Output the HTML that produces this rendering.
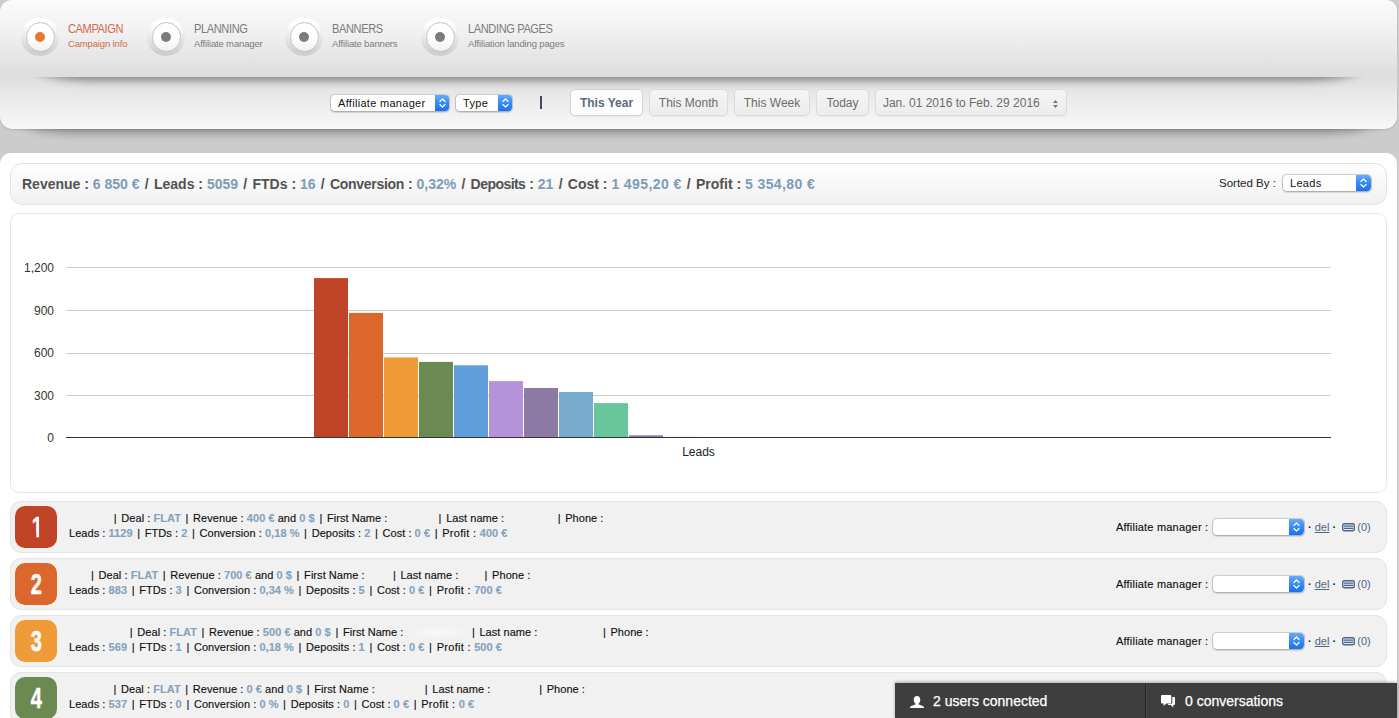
<!DOCTYPE html>
<html><head><meta charset="utf-8"><title>Campaign</title>
<style>
*{box-sizing:border-box}
html,body{margin:0;padding:0}
body{width:1399px;height:718px;overflow:hidden;background:#cccccc;font-family:"Liberation Sans","DejaVu Sans",sans-serif;font-size:11px;color:#222;position:relative}
#topsh{position:absolute;left:18px;top:115px;width:1361px;height:14px;border-radius:0 0 60px 60px/0 0 14px 14px;box-shadow:0 4px 10px rgba(0,0,0,.33)}
#top{position:absolute;left:0;top:0;width:1397px;height:129px;border-radius:12px 11px 13px 13px;background:linear-gradient(#dfdfdf 0,#dfdfdf 78px,#ebebeb 100px,#f8f8f8 129px);box-shadow:0 1px 2px rgba(0,0,0,.12);overflow:hidden}
#nav{position:absolute;left:0;top:0;width:1397px;height:77px;background:linear-gradient(#fbfbfb,#f1f1f1 40%,#dddddd);z-index:2}
#navsh{position:absolute;left:34px;top:63px;width:1329px;height:14px;border-radius:0 0 60px 60px/0 0 14px 14px;box-shadow:0 3px 10px rgba(0,0,0,.45);z-index:1}
.ni{position:absolute;top:0;height:77px}
.ni .c{position:absolute;left:-1px;top:18px;width:38px;height:38px;border-radius:50%;background:linear-gradient(#fff 15%,#cfcfcf 90%)}
.ni .c:before{content:"";position:absolute;left:4.600px;top:4.300px;width:27.500px;height:27.500px;border-radius:50%;background:linear-gradient(#fff 50%,#f1f1f1);border:1px solid #c4c4c4}
.ni .c:after{content:"";position:absolute;left:14.300px;top:14px;width:10.200px;height:10.200px;border-radius:50%;background:#7c7c7c}
.ni.on .c:after{background:#e8792c}
.ni .t{position:absolute;left:46px;top:22px;font-size:12px;line-height:14px;color:#7b7b7b;white-space:nowrap;letter-spacing:-.4px;transform:scaleX(.92);transform-origin:0 0}
.ni .s{position:absolute;left:46px;top:38px;font-size:9.5px;line-height:12px;color:#7b7b7b;white-space:nowrap;letter-spacing:-.15px}
.ni.on .t,.ni.on .s{color:#d4694a}

#filters{position:absolute;left:0;top:77px;width:1397px;height:51px}
.sel{position:absolute;height:18px;border-radius:5px;background:#fff;border:1px solid #c2c2c2;border-top-color:#cdcdcd;border-bottom-color:#b0b0b0;font-size:11px;line-height:16px;color:#111;padding-left:7px;white-space:nowrap;overflow:hidden;box-shadow:0 .5px 1px rgba(0,0,0,.12);letter-spacing:.3px}
.sel i{position:absolute;right:-1px;top:-1px;width:15px;height:18px;border-radius:0 5px 5px 0;background:linear-gradient(#6bb0fa,#3b8df6 45%,#1a6cf0)}
.sel i svg{position:absolute;left:0;top:0}
.btn{position:absolute;top:12px;height:27px;border:1px solid #dbdbdb;border-radius:5px;background:linear-gradient(#f5f5f5,#ececec);box-shadow:0 1px 1px rgba(0,0,0,.04);color:#6c6c6c;font-size:12px;line-height:26.500px;text-align:center;white-space:nowrap}
.btn.act{background:#fdfdfd;color:#5d6a80;font-weight:bold;border-color:#d4d4d4}
#sep{position:absolute;left:540px;top:19px;width:2px;height:13px;background:#3f4a5c}
#main{position:absolute;left:0;top:153px;width:1397px;height:600px;background:#fff;border-radius:11px 11px 0 0}
#sum{position:absolute;left:10px;top:10px;width:1377px;height:42px;border:1px solid #e3e3e3;border-radius:12px;background:linear-gradient(#fefefe,#f1f1f1);font-size:14px;font-weight:bold;color:#525252;line-height:40px;padding-left:11px;white-space:nowrap;letter-spacing:0}
#sum b{color:#7d9cb7}
#sum i{font-style:normal;margin:0 1.4px}
#sorted{position:absolute;left:1208px;top:0;font-size:11.5px;font-weight:normal;color:#222;line-height:38px}
#chart{position:absolute;left:10px;top:60px;width:1377px;height:280px;border:1px solid #e6e6e6;border-radius:9px;background:#fff;overflow:hidden}
.row{position:absolute;left:10px;width:1377px;height:52px;border:1px solid #e4e4e4;border-radius:11px;background:#f1f1f1;font-size:11px;color:#111}
.row .n{position:absolute;left:4px;top:4px;width:42px;height:42px;border-radius:10px;color:#fff;font-weight:bold;font-size:29.5px;line-height:42px;text-align:center}
.row .n span{display:inline-block;transform:scaleX(.68);-webkit-text-stroke:.5px #fff}
.row .l1,.row .l2,.row .am{-webkit-text-stroke:.15px}
.row .l1,.row .l2{position:absolute;left:58px;white-space:nowrap;line-height:15px;height:15px;letter-spacing:.05px}
.row .l1{top:9px}.row .l2{top:24px}
.row b{font-weight:bold;color:#86a3bd}
.row i{font-style:normal;margin:0 1.5px}
.row u{text-decoration:none;color:#9aa}
.sp{display:inline-block}
.sp.sm{height:11px;vertical-align:-2px;background:radial-gradient(ellipse closest-side,rgba(255,255,255,.55),rgba(255,255,255,.3) 60%,rgba(255,255,255,0))}
.row s{text-decoration:none}.row s.p{letter-spacing:.3px}
.row .am{position:absolute;left:1105px;top:18px;line-height:15px;white-space:nowrap;letter-spacing:.2px}
.row .sel{left:1201px;top:16px;width:93px}
.row .tail{position:absolute;left:1297px;top:18px;line-height:15px;white-space:nowrap;color:#4e6784}
.row .tail em{font-style:normal;font-weight:bold;color:#222}
.row .tail a{color:#4e6784;text-decoration:underline}
#bar{position:absolute;left:895px;top:683px;width:502px;height:36px;background:#3e3e3e;color:#fff;font-size:14px;line-height:36px;-webkit-text-stroke:.25px #fff;box-shadow:0 -1px 3px rgba(0,0,0,.3)}
#bar .d{position:absolute;left:250px;top:0;width:2px;height:36px;background:linear-gradient(90deg,#262626 50%,#4a4a4a 50%)}
#bar span{position:absolute;top:0;white-space:nowrap}
#bar svg{position:absolute}
</style></head><body>
<div id="topsh"></div>
<div id="top">
 <div id="navsh"></div>
 <div id="nav">
  <div class="ni on" style="left:22px"><span class="c"></span><span class="t">CAMPAIGN</span><span class="s">Campaign info</span></div>
  <div class="ni" style="left:148px"><span class="c"></span><span class="t">PLANNING</span><span class="s">Affiliate manager</span></div>
  <div class="ni" style="left:286px"><span class="c"></span><span class="t">BANNERS</span><span class="s">Affiliate banners</span></div>
  <div class="ni" style="left:422px"><span class="c"></span><span class="t">LANDING PAGES</span><span class="s">Affiliation landing pages</span></div>
 </div>

 <div id="filters">
  <div class="sel" style="left:330px;top:17px;width:120px">Affiliate manager<i><svg width="15" height="18" viewBox="0 0 15 18"><path d="M4.900 7.500 7.500 5 10.100 7.500M4.900 10.500 7.500 13 10.100 10.500" fill="none" stroke="#fff" stroke-width="1.200" stroke-linecap="round" stroke-linejoin="round"/></svg></i></div>
  <div class="sel" style="left:455px;top:17px;width:58px">Type<i><svg width="15" height="18" viewBox="0 0 15 18"><path d="M4.900 7.500 7.500 5 10.100 7.500M4.900 10.500 7.500 13 10.100 10.500" fill="none" stroke="#fff" stroke-width="1.200" stroke-linecap="round" stroke-linejoin="round"/></svg></i></div>
  <div id="sep"></div>
  <div class="btn act" style="left:570px;width:73px">This Year</div>
  <div class="btn" style="left:649px;width:79px">This Month</div>
  <div class="btn" style="left:734px;width:76px">This Week</div>
  <div class="btn" style="left:816px;width:53px">Today</div>
  <div class="btn" style="left:875px;width:192px">Jan. 01 2016 to Feb. 29 2016 <svg width="7" height="10" viewBox="0 0 7 10" style="margin-left:9px;vertical-align:-1.500px"><path d="M1 4 3.500 1 6 4zM1 6 3.500 9 6 6z" fill="#777"/></svg></div>
 </div>
</div>
<div id="main">
<div id="sum">Revenue : <b>6 850 €</b> <i>/</i> Leads : <b>5059</b> <i>/</i> FTDs : <b>16</b> <i>/</i> <span style="letter-spacing:-.3px">Conversion</span> : <b>0,32%</b> <i>/</i> <span style="letter-spacing:-.55px">Deposits</span> : <b>21</b> <i>/</i> Cost : <b style="letter-spacing:.4px">1 495,20 €</b> <i>/</i> Profit : <b style="letter-spacing:.4px">5 354,80 €</b>
<div id="sorted">Sorted By :</div><div class="sel" style="left:1271px;top:10px;width:90px;font-weight:normal">Leads<i><svg width="15" height="18" viewBox="0 0 15 18"><path d="M4.900 7.500 7.500 5 10.100 7.500M4.900 10.500 7.500 13 10.100 10.500" fill="none" stroke="#fff" stroke-width="1.200" stroke-linecap="round" stroke-linejoin="round"/></svg></i></div></div>
<div id="chart"><svg width="1375" height="277" style="position:absolute;left:0;top:1px" font-family="Liberation Sans, Arial, sans-serif" font-size="12">
<rect x="55" y="52" width="1265" height="1" fill="#ccc"/>
<rect x="55" y="95.0" width="1265" height="1" fill="#ccc"/>
<rect x="55" y="138" width="1265" height="1" fill="#ccc"/>
<rect x="55" y="180.0" width="1265" height="1" fill="#ccc"/>
<text x="43" y="57.3" text-anchor="end" fill="#333">1,200</text>
<text x="43" y="99.8" text-anchor="end" fill="#333">900</text>
<text x="43" y="142.3" text-anchor="end" fill="#333">600</text>
<text x="43" y="184.8" text-anchor="end" fill="#333">300</text>
<text x="43" y="227.3" text-anchor="end" fill="#333">0</text>
<rect x="303" y="63.1" width="34" height="159.9" fill="#bf4427"/>
<rect x="338" y="97.9" width="34" height="125.1" fill="#dc672d"/>
<rect x="373" y="142.4" width="34" height="80.6" fill="#ef9b38"/>
<rect x="408" y="146.9" width="34" height="76.1" fill="#6b8a52"/>
<rect x="443" y="150.3" width="34" height="72.7" fill="#5f9edb"/>
<rect x="478" y="166.2" width="34" height="56.8" fill="#b592d9"/>
<rect x="513" y="173.0" width="34" height="50.0" fill="#8d7aa4"/>
<rect x="548" y="177.0" width="34" height="46.0" fill="#77abce"/>
<rect x="583" y="188.1" width="34" height="34.9" fill="#68c59c"/>
<rect x="618" y="220.3" width="34" height="2.7" fill="#8a7ab4"/>
<rect x="653" y="221.9" width="34" height="1.1" fill="#7a6a8a"/>
<rect x="688" y="222.4" width="34" height="0.6" fill="#999"/>
<rect x="723" y="222.7" width="34" height="0.3" fill="#aaa"/>
<rect x="55" y="222" width="1265" height="1" fill="#333"/>
<text x="687.5" y="241" text-anchor="middle" fill="#222">Leads</text>
</svg></div>
<div class="row" style="top:348px"><div class="n" style="background:#bf4427"><span style="clip-path:polygon(0 0,67% 0,67% 100%,42% 100%,42% 27px,0 27px);position:relative;left:1.6px">1</span></div>
 <div class="l1"><span class="sp" style="width:43.3px"></span><i>|</i> Deal : <b>FLAT</b> <i>|</i> Revenue : <b>400 €</b> and <b>0 $</b> <i>|</i> First Name : <span class="sp" style="width:46.6px"></span><i>|</i> Last name : <span class="sp" style="width:48.9px"></span><i>|</i> Phone :</div><div class="l2">Leads : <b>1129</b> <i>|</i> FTDs : <b>2</b> <i>|</i> Conversion : <b>0,18 %</b> <i>|</i> Deposits : <b>2</b> <i>|</i> <s>Cost : </s><b>0 €</b> <i>|</i> <s class="p">Profit : </s><b>400 €</b></div>
 <div class="am">Affiliate manager :</div><div class="sel"><i><svg width="15" height="18" viewBox="0 0 15 18"><path d="M4.900 7.500 7.500 5 10.100 7.500M4.900 10.500 7.500 13 10.100 10.500" fill="none" stroke="#fff" stroke-width="1.200" stroke-linecap="round" stroke-linejoin="round"/></svg></i></div><div class="tail"><em>·</em> <a>del</a> <em>·</em> <svg width="13" height="8.500" viewBox="0 0 13 8.500" style="vertical-align:-.5px;margin-left:2.5px;margin-right:-.5px"><rect x=".7" y=".7" width="11.600" height="7.100" rx="1.500" fill="#e3e9f0" stroke="#4e6784" stroke-width="1.400"/><path d="M2 3.100h9M2 5.400h9" stroke="#4e6784" stroke-width="1.100"/></svg> (0)</div></div>
<div class="row" style="top:405px"><div class="n" style="background:#dc672d"><span>2</span></div>
 <div class="l1"><span class="sp" style="width:20.5px"></span><i>|</i> Deal : <b>FLAT</b> <i>|</i> Revenue : <b>700 €</b> and <b>0 $</b> <i>|</i> First Name : <span class="sp" style="width:23.7px"></span><i>|</i> Last name : <span class="sp" style="width:21.5px"></span><i>|</i> Phone :</div><div class="l2">Leads : <b>883</b> <i>|</i> FTDs : <b>3</b> <i>|</i> Conversion : <b>0,34 %</b> <i>|</i> Deposits : <b>5</b> <i>|</i> <s>Cost : </s><b>0 €</b> <i>|</i> <s class="p">Profit : </s><b>700 €</b></div>
 <div class="am">Affiliate manager :</div><div class="sel"><i><svg width="15" height="18" viewBox="0 0 15 18"><path d="M4.900 7.500 7.500 5 10.100 7.500M4.900 10.500 7.500 13 10.100 10.500" fill="none" stroke="#fff" stroke-width="1.200" stroke-linecap="round" stroke-linejoin="round"/></svg></i></div><div class="tail"><em>·</em> <a>del</a> <em>·</em> <svg width="13" height="8.500" viewBox="0 0 13 8.500" style="vertical-align:-.5px;margin-left:2.5px;margin-right:-.5px"><rect x=".7" y=".7" width="11.600" height="7.100" rx="1.500" fill="#e3e9f0" stroke="#4e6784" stroke-width="1.400"/><path d="M2 3.100h9M2 5.400h9" stroke="#4e6784" stroke-width="1.100"/></svg> (0)</div></div>
<div class="row" style="top:462px"><div class="n" style="background:#ef9b38"><span>3</span></div>
 <div class="l1"><span class="sp" style="width:59.3px"></span><i>|</i> Deal : <b>FLAT</b> <i>|</i> Revenue : <b>500 €</b> and <b>0 $</b> <i>|</i> First Name : <span class="sp sm" style="width:63.9px"></span><i>|</i> Last name : <span class="sp" style="width:60.8px"></span><i>|</i> Phone :</div><div class="l2">Leads : <b>569</b> <i>|</i> FTDs : <b>1</b> <i>|</i> Conversion : <b>0,18 %</b> <i>|</i> Deposits : <b>1</b> <i>|</i> <s>Cost : </s><b>0 €</b> <i>|</i> <s class="p">Profit : </s><b>500 €</b></div>
 <div class="am">Affiliate manager :</div><div class="sel"><i><svg width="15" height="18" viewBox="0 0 15 18"><path d="M4.900 7.500 7.500 5 10.100 7.500M4.900 10.500 7.500 13 10.100 10.500" fill="none" stroke="#fff" stroke-width="1.200" stroke-linecap="round" stroke-linejoin="round"/></svg></i></div><div class="tail"><em>·</em> <a>del</a> <em>·</em> <svg width="13" height="8.500" viewBox="0 0 13 8.500" style="vertical-align:-.5px;margin-left:2.5px;margin-right:-.5px"><rect x=".7" y=".7" width="11.600" height="7.100" rx="1.500" fill="#e3e9f0" stroke="#4e6784" stroke-width="1.400"/><path d="M2 3.100h9M2 5.400h9" stroke="#4e6784" stroke-width="1.100"/></svg> (0)</div></div>
<div class="row" style="top:519px"><div class="n" style="background:#6b8a52"><span>4</span></div>
 <div class="l1"><span class="sp" style="width:43.0px"></span><i>|</i> Deal : <b>FLAT</b> <i>|</i> Revenue : <b>0 €</b> and <b>0 $</b> <i>|</i> First Name : <span class="sp" style="width:45.4px"></span><i>|</i> Last name : <span class="sp" style="width:44.2px"></span><i>|</i> Phone :</div><div class="l2">Leads : <b>537</b> <i>|</i> FTDs : <b>0</b> <i>|</i> Conversion : <b>0 %</b> <i>|</i> Deposits : <b>0</b> <i>|</i> <s>Cost : </s><b>0 €</b> <i>|</i> <s class="p">Profit : </s><b>0 €</b></div>
 <div class="am">Affiliate manager :</div><div class="sel"><i><svg width="15" height="18" viewBox="0 0 15 18"><path d="M4.900 7.500 7.500 5 10.100 7.500M4.900 10.500 7.500 13 10.100 10.500" fill="none" stroke="#fff" stroke-width="1.200" stroke-linecap="round" stroke-linejoin="round"/></svg></i></div><div class="tail"><em>·</em> <a>del</a> <em>·</em> <svg width="13" height="8.500" viewBox="0 0 13 8.500" style="vertical-align:-.5px;margin-left:2.5px;margin-right:-.5px"><rect x=".7" y=".7" width="11.600" height="7.100" rx="1.500" fill="#e3e9f0" stroke="#4e6784" stroke-width="1.400"/><path d="M2 3.100h9M2 5.400h9" stroke="#4e6784" stroke-width="1.100"/></svg> (0)</div></div>
</div>
<div id="bar"><svg style="left:15px;top:12.5px" width="14" height="12.5" viewBox="0 0 14 12.5"><path d="M7 0C5 0 3.7 1.6 3.700 3.800c0 1.600.7 3 1.600 3.800v.9L1.200 10C.4 10.300 0 11 0 11.800v.7h14v-.7c0-.8-.4-1.500-1.200-1.800L8.700 8.500v-.9c.9-.8 1.600-2.200 1.600-3.800C10.300 1.600 9 0 7 0z" fill="#fff"/></svg><span style="left:38px">2 users connected</span><div class="d"></div>
<svg style="left:265.500px;top:12px" width="14" height="12.5" viewBox="0 0 14 12.5"><path d="M1 0h8.300a1 1 0 0 1 1 1v6.500a1 1 0 0 1-1 1H5.300L2.600 11V8.500H1a1 1 0 0 1-1-1V1a1 1 0 0 1 1-1z" fill="#fff"/><path d="M11.300 2h1.700a1 1 0 0 1 1 1v6a1 1 0 0 1-1 1h-.8v2.400L9.700 10H6.500l1.300-1.200h2.500a1 1 0 0 0 1-1z" fill="#fff"/></svg><span style="left:290px">0 conversations</span></div>

</body></html>
